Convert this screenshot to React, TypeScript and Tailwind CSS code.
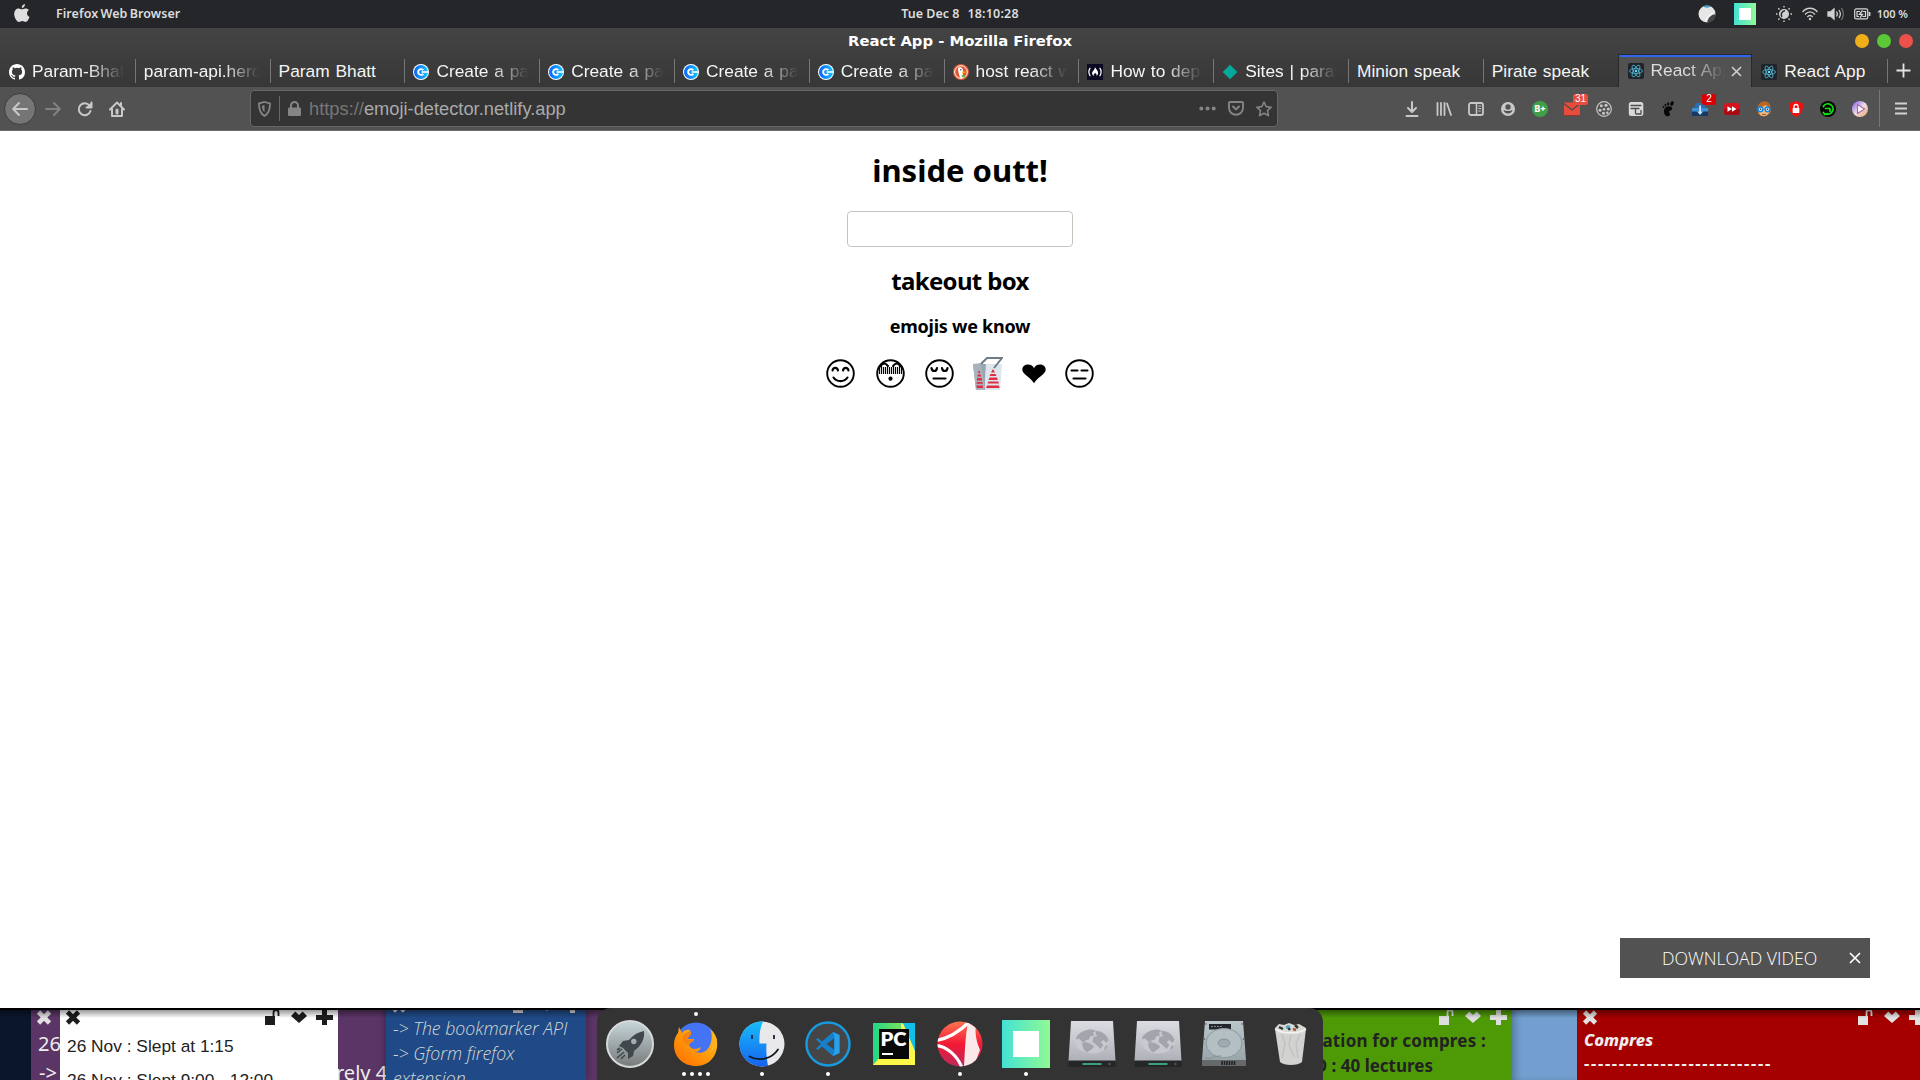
import React from "react";

const C = "#c8c8c8";

const Apple = () => (
  <svg width="16" height="20" viewBox="0 0 16 20" fill="#dedede">
    <path d="M11 0c.2 2-1.500 4-3.200 4C7.500 2 9.200.3 11 0zM8 5.200C9 5.200 10 4.300 11.700 4.400c1.300 0 2.500.6 3.200 1.700-2.800 1.800-2.300 5.700.6 6.800-.6 1.800-2.200 5-3.900 5-1.300 0-1.700-.8-3.300-.8s-2 .8-3.300.8C2.900 18 .2 13.700.2 10c0-3.600 2.200-5.600 4.300-5.600 1.500 0 2.500.8 3.500.8z" />
  </svg>
);

const Github = () => (
  <svg width="16" height="16" viewBox="0 0 16 16" fill="#fff">
    <path d="M8 0C3.580 0 0 3.580 0 8c0 3.540 2.290 6.530 5.470 7.590.4.070.55-.17.55-.38 0-.19-.01-.82-.01-1.490-2.010.37-2.530-.49-2.690-.94-.09-.23-.48-.94-.82-1.130-.28-.15-.68-.52-.01-.53.63-.01 1.080.58 1.230.82.720 1.210 1.870.87 2.330.66.070-.52.28-.87.510-1.070-1.780-.2-3.640-.89-3.640-3.950 0-.87.310-1.590.82-2.150-.08-.2-.36-1.020.08-2.120 0 0 .67-.21 2.200.82a7.600 7.600 0 0 1 4 0c1.530-1.040 2.200-.82 2.200-.82.44 1.100.16 1.920.08 2.120.510.56.82 1.270.82 2.150 0 3.070-1.870 3.750-3.650 3.950.29.25.54.73.54 1.480 0 1.070-.01 1.930-.01 2.200 0 .21.15.46.55.38A8 8 0 0 0 16 8c0-4.420-3.580-8-8-8z" />
  </svg>
);
const Coggle = () => (
  <svg width="16" height="16" viewBox="0 0 16 16">
    <defs><linearGradient id="cg"><stop stopColor="#0a62ff" /><stop offset="1" stopColor="#16c4ff" /></linearGradient></defs>
    <circle cx="8" cy="8" r="8" fill="#fff" /><circle cx="8" cy="8" r="7" fill="url(#cg)" />
    <path d="M10.300 6.200A2.900 2.900 0 1 0 10.300 9.800" fill="none" stroke="#fff" strokeWidth="1.900" /><path d="M8.500 7.200h6.500v1.600H8.500z" fill="#fff" />
  </svg>
);
const Duck = () => (
  <svg width="16" height="16" viewBox="0 0 16 16">
    <circle cx="8" cy="8" r="8" fill="#de5833" /><circle cx="8" cy="8" r="6.300" fill="none" stroke="#fff" strokeWidth="1" />
    <path d="M5 4c2-1.500 5-.5 5 3l-.5 2 1 4.500-3 .8C6 11 5 7 5 4z" fill="#fff" /><path d="M9 7.500l4 .2-3.500 1.800z" fill="#fdd20a" /><path d="M8.500 11l3.500.5v2l-3-.5z" fill="#5bbb3b" /><circle cx="7.800" cy="5.800" r=".8" fill="#2d4f8e" />
  </svg>
);
const Camp = () => (
  <svg width="16" height="16" viewBox="0 0 17 17">
    <rect width="17" height="17" fill="#0a0a23" />
    <path d="M3.500 4c-2 2.500-2 6.500 0 9M13.500 4c2 2.500 2 6.500 0 9" stroke="#fff" strokeWidth="1.300" fill="none" />
    <path d="M8.500 3.500c1 2 3.300 3.500 3.300 6 0 1.500-1 2.500-1.800 3 .5-1 .3-2-1.300-3-1.500 1-2 2-1.300 3-1.300-.5-2-1.500-2-3 0-1.500 2.500-2.500 3.100-6z" fill="#fff" />
  </svg>
);
const Diamond = () => <svg width="16" height="16" viewBox="0 0 16 16"><path d="M8 .7L15.300 8 8 15.300.7 8z" fill="#05a99c" /></svg>;
const ReactIcon = () => (
  <svg width="16" height="16" viewBox="0 0 16 16">
    <rect width="16" height="16" rx="2" fill="#20232a" />
    <g fill="none" stroke="#4fb4cf" strokeWidth=".85"><ellipse cx="8" cy="8" rx="6.500" ry="2.500" /><ellipse cx="8" cy="8" rx="6.500" ry="2.500" transform="rotate(60 8 8)" /><ellipse cx="8" cy="8" rx="6.500" ry="2.500" transform="rotate(120 8 8)" /></g>
    <circle cx="8" cy="8" r="1.300" fill="#61dafb" />
  </svg>
);

const tabs: { title: string; icon?: React.ReactNode; active?: boolean; fade?: boolean }[] = [
  { title: "Param-Bhat", icon: <Github />, fade: true },
  { title: "param-api.hero", fade: true },
  { title: "Param Bhatt" },
  { title: "Create a pa", icon: <Coggle />, fade: true },
  { title: "Create a pa", icon: <Coggle />, fade: true },
  { title: "Create a pa", icon: <Coggle />, fade: true },
  { title: "Create a pa", icon: <Coggle />, fade: true },
  { title: "host react w", icon: <Duck />, fade: true },
  { title: "How to depl", icon: <Camp />, fade: true },
  { title: "Sites | paran", icon: <Diamond />, fade: true },
  { title: "Minion speak" },
  { title: "Pirate speak" },
  { title: "React App", icon: <ReactIcon />, active: true, fade: true },
  { title: "React App", icon: <ReactIcon /> },
];

const S = ({ children, w = 16 }: { children: React.ReactNode; w?: number }) => (
  <svg className="shrink-0 overflow-visible" width={w} height={w} viewBox="0 0 16 16" fill="none" stroke={C} strokeWidth="2" strokeLinecap="round" strokeLinejoin="round">{children}</svg>
);

const extensions: React.ReactNode[] = [
  <S><path d="M8 1v9.500M4 7l4 4 4-4M2.500 15h11" /></S>,
  <S><path d="M1.500 2v12M5 2v12M8.500 2v12M11 2.500l4 11.500" strokeWidth="1.800" /></S>,
  <S><rect x="1" y="2" width="14" height="12" rx="2" strokeWidth="1.800" /><path d="M8.500 2v12" strokeWidth="1.500" /><path d="M10.800 5h2M10.800 7.500h2M10.800 10h1.500" strokeWidth="1.100" /></S>,
  <S><circle cx="8" cy="8" r="7" fill={C} stroke="none" /><circle cx="8" cy="6" r="2.700" fill="#525252" stroke="none" /><path d="M3.500 9c.8 2.800 2.500 3.500 4.500 3.500s3.700-.7 4.500-3.500c-1 .5-2.500 1-4.500 1s-3.500-.5-4.500-1z" fill="#525252" stroke="none" /></S>,
  <S><circle cx="8" cy="8" r="8" fill="#3fa047" stroke="none" /><text x="8.200" y="11" textAnchor="middle" fontSize="8.500" fontWeight="800" fill="#fff" stroke="none" fontFamily="Inter, sans-serif">B+</text></S>,
  <S><rect x="0" y="1.500" width="16" height="13.500" fill="#e84c3d" stroke="none" /><path d="M0 2.500l8 6.500 8-6.500" stroke="#4a4a4a" strokeWidth="1.200" /><rect x="0" y="14" width="16" height="1.200" fill="#8b3a32" stroke="none" /></S>,
  <S><circle cx="8" cy="8" r="7.300" strokeWidth="1.200" /><g fill={C} stroke="none"><circle cx="5.300" cy="4.800" r="1.500" /><circle cx="10" cy="4.300" r="1.600" /><circle cx="4" cy="9.200" r="1.500" /><circle cx="8" cy="8.200" r="1.300" /><circle cx="12.300" cy="8" r="1.500" /><circle cx="7.500" cy="12.300" r="1.500" /><circle cx="11.300" cy="11.700" r="1.300" /></g></S>,
  <S><rect x=".8" y="1" width="14.500" height="14" rx="2.500" fill="#dadada" stroke="none" /><path d="M3 4.500h10M3 7.500h8" stroke="#4c4c4c" strokeWidth="1.300" /><path d="M7.500 8.500V12c0 .8.500 1 1 1H13V9.500" stroke="#4c4c4c" strokeWidth="1.300" /></S>,
  <S><g fill="#080808" stroke="none"><path d="M7 5.500c4-1.200 6 .7 5 2.800-.8 1.700-3 1.200-3 2.500s1.300 1 1 2.700C9.500 16 5.500 16 4.500 13 3.500 10 4 6.500 7 5.500z" /><ellipse cx="12" cy="2.500" rx="1.700" ry="2.300" transform="rotate(20 12 2.500)" /><ellipse cx="8.200" cy="2.800" rx="1.100" ry="1.600" /><ellipse cx="5.500" cy="4" rx=".9" ry="1.300" /><ellipse cx="3.500" cy="6" rx=".8" ry="1.100" /></g></S>,
  <S><path d="M2.500 5l2-3h7l2 3v10h-11z" fill="#2a6db0" stroke="none" /><path d="M0 7h16v4H0z" fill="#3f8ed2" stroke="none" /><path d="M0 10.500h16V15H0z" fill="#153a66" stroke="none" /><path d="M7.200 4.500h1.800v6h2L8.100 14l-3-3.500h2.100z" fill="#c8e5ff" stroke="none" /></S>,
  <S><rect x="0" y="2" width="16" height="12" rx="3" fill="#d5131c" stroke="none" /><path d="M0 8h16v3a3 3 0 0 1-3 3H3a3 3 0 0 1-3-3z" fill="#aa0b12" stroke="none" /><path d="M3.500 5.200L8 8l-4.500 2.800zM8 5.200L12.500 8 8 10.800z" fill="#fff" stroke="none" /></S>,
  <S><path d="M1.500 9C1-1 12-2 14 4l1 6-1 3H2z" fill="#b96722" stroke="none" /><path d="M3 7l7-3 3 3v4c-.500 5-9 6-10 1z" fill="#f0b878" stroke="none" /><g fill="#e3f3ff" stroke="#1687e0" strokeWidth="1.500"><circle cx="4.500" cy="8.300" r="2.400" /><circle cx="11.500" cy="8.300" r="2.400" /></g><circle cx="4.500" cy="8.300" r=".8" fill="#222" stroke="none" /><circle cx="11.500" cy="8.300" r=".8" fill="#222" stroke="none" /><path d="M6.500 13.500h3" stroke="#a14a2c" strokeWidth="1" /></S>,
  <S><path d="M8 0l7 2.500C15 9 14 13 8 16 2 13 1 9 1 2.500z" fill="#f40f0f" stroke="none" /><rect x="4.700" y="7" width="6.600" height="5" fill="#fff" stroke="none" /><path d="M6 7V5.500a2 2 0 0 1 4 0V7" stroke="#fff" strokeWidth="1.300" /></S>,
  <S><circle cx="8" cy="8" r="8" fill="#050505" stroke="none" /><path d="M3.300 5.500a5.200 5.200 0 1 1 2.200 7.200M3.300 11.500l1.500 2 3-.8" stroke="#10e010" strokeWidth="1.800" /><path d="M5.500 7.500h4.500v3" stroke="#10e010" strokeWidth="1.600" /></S>,
  <S><defs><linearGradient id="pl" x2="1" y2="1"><stop stopColor="#7a5cf0" /><stop offset=".5" stopColor="#f3d9e4" /><stop offset="1" stopColor="#e8a65c" /></linearGradient></defs><circle cx="8" cy="8" r="8" fill="url(#pl)" stroke="none" /><path d="M5.500 3.500l7 4.500-7 4.500z" fill="#fff" stroke="#a66aa6" strokeWidth="1.200" /></S>,
];

const Face = ({ kind, label }: { kind: "smile" | "flushed" | "pensive" | "flat"; label: string }) => (
  <svg role="img" aria-label={label} width="29" height="29" viewBox="0 0 29 29" fill="none" stroke="#000" strokeWidth="2.100" strokeLinecap="round">
    <circle cx="14.500" cy="14.500" r="13.300" strokeWidth="1.900" />
    {kind === "smile" && <path d="M6.500 11.500c.5-3.500 5-3.500 5.500 0M17 11.500c.5-3.500 5-3.500 5.500 0M7.500 18.500c3 4.800 11 4.800 14 0" />}
    {kind === "pensive" && <path d="M6.500 9c.5 4 5 4 5.500 0M17 9c.5 4 5 4 5.500 0M8.500 19.500h12" />}
    {kind === "flat" && <path d="M6.500 11.500h6M16.500 11.500h6M8.500 19.500h12" />}
    {kind === "flushed" && (
      <>
        <path d="M3.500 8v7M5.500 6v9M7.500 8v7M9.500 8v7M11.500 7v8M13.500 8v7M15.500 8v7M17.500 7v8M19.500 8v7M21.500 8v7M23.500 6v9M25.500 8v7" strokeWidth="1.150" strokeLinecap="butt" />
        <path d="M4 7.500c3-3.500 5-4 8-.5M17 7c3-3.500 5-3 8 .5" strokeWidth="2" />
        <circle cx="14.500" cy="19.700" r="2.100" fill="#000" stroke="none" />
      </>
    )}
  </svg>
);

const Cup = () => (
  <svg role="img" aria-label="takeout box" width="30" height="33" viewBox="0 0 30 33">
    <path d="M0 7h13l-1 26H3z" fill="#98a6b1" /><path d="M0 7l8-1 4 27H3z" fill="#a7b3bd" /><path d="M13 7l16 0-2 26H12z" fill="#dfe6eb" />
    <path d="M8 7l6-6h15l-8 10" fill="none" stroke="#6b7b88" strokeWidth="2" />
    <g fill="#dd2e44"><path d="M6 13l1.500 3h-2.500zM4.800 17.500h3l.5 2H4.300zM4.200 21h4.600l.4 2.500H3.800zM3.700 25h5.800l.4 1.800H3.500zM3.300 28.500H10V31H3.800zM20 12l2 3.500h-4zM17.500 17h5l1 2h-7zM16.500 20.500h7.500l.8 2.500H15.500zM15.300 24.500h10l.5 2H14.500zM14 28.500h12l.5 2.500H13z" /></g>
  </svg>
);

const Heart = () => <svg role="img" aria-label="heart" width="24" height="20" viewBox="0 0 24 20"><path d="M12 4.500C13-.8 23.500-1.500 23.700 5.500c0 5-7.700 7-11.700 13.700C8 12.500.3 10.500.3 5.500.5-1.500 11-.8 12 4.500z" /></svg>;

const CrossMark = ({ color, cls }: { color: string; cls: string }) => <svg className={`absolute ${cls}`} width="16" height="15" viewBox="0 0 16 15"><path d="M2.500 2l11 11M13.500 2l-11 11" stroke={color} strokeWidth="4.600" /></svg>;
const NoteTools = ({ color, cls }: { color: string; cls: string }) => (
  <svg className={`absolute ${cls}`} width="70" height="18" viewBox="0 0 70 18" fill={color}>
    <path d="M0 8h10v9H0z" /><path d="M8.500 8V4.500a2.500 2.500 0 0 1 5 0V8" fill="none" stroke={color} strokeWidth="1.800" />
    <path d="M30.300 3.500L34 7l3.700-3.500L42 8l-8 7-8-7z" /><path d="M57 2h5v5h6v5h-6v5h-5v-5h-6V7h6z" />
  </svg>
);

const Globe = () => (
  <svg width="48" height="48" viewBox="0 0 48 48">
    <defs><linearGradient id="dr" y2="1" x2="0"><stop stopColor="#dcdde2" /><stop offset="1" stopColor="#aeb0b9" /></linearGradient></defs>
    <path d="M3 1h42l2.500 40H.5z" fill="url(#dr)" /><path d="M.5 40.500h47V47H.5z" fill="#242627" />
    <rect x="14.500" y="43" width="19" height="2" fill="#3c9f80" /><circle cx="41.500" cy="44" r="1.200" fill="#555" />
    <ellipse cx="24" cy="21.500" rx="16.800" ry="12" fill="#c8cad0" />
    <path d="M8.500 17c3-5 9-7.500 15.500-7.500l4 1.500-3 1.500 1 3-4 1-1 3-4 1 1 2-4-1-3-3-3 1zM14 23c3-2 9 0 12 3.500-1 3-4 3.500-7 6-3-1.500-4.500-5-5-9.500zM28 11c6 0 11 4 12.500 9l-2 3-3-3-3 2 3 3-3 4-4-4-4-3 1-5 4-1-2-2zM37 26l3-1-2 4-2 1z" fill="#a3a5ac" />
  </svg>
);
const Square = ({ size, id }: { size: number; id: string }) => (
  <svg width={size} height={size} viewBox="0 0 48 48"><defs><linearGradient id={id}><stop stopColor="#43e2d4" /><stop offset="1" stopColor="#90f995" /></linearGradient></defs><rect width="48" height="48" fill={`url(#${id})`} /><rect x="11" y="11" width="26" height="26" fill="#fff" /></svg>
);

const dock: { icon: React.ReactNode; dots: number; top?: boolean }[] = [
  { dots: 0, icon: (
    <svg width="48" height="48" viewBox="0 0 48 48"><defs><linearGradient id="rk" y2="1" x2="0"><stop stopColor="#c7d6da" /><stop offset="1" stopColor="#777a7a" /></linearGradient></defs>
      <circle cx="24" cy="24" r="23" fill="url(#rk)" stroke="#d6d8d9" strokeWidth="2" />
      <path fillRule="evenodd" d="M38 11c1 8-3 15-10 20l-1 5-5 3 0-6-5-5-4-2 4-5 6-1c4-5 9-8 15-9zM30.500 21.500a2.700 2.700 0 1 0-5.400 0 2.700 2.700 0 0 0 5.400 0z" fill="#40484d" />
      <path d="M16 29l-5 4M18 32l-7 6M19 35l-4 4M14 28l-3 2" stroke="#40484d" strokeWidth="1.600" /></svg>) },
  { dots: 4, top: true, icon: (
    <svg width="48" height="48" viewBox="0 0 48 48"><defs><linearGradient id="ff" x1="1" x2="0" y2="1"><stop stopColor="#ffc229" /><stop offset=".5" stopColor="#ff9a0a" /><stop offset="1" stopColor="#ff6a00" /></linearGradient></defs>
      <circle cx="24" cy="23" r="20.500" fill="#4473f4" />
      <path d="M7 7l3 6c2-3 5-4 8-3l1 4c-2 1-3 3-3 5l6 0c0 3-4 3-5 6 3 6 8 4 12 2-1 3-3 5-6 5 12 4 19-8 16-22 5 5 7 11 6 18-2 11-10 18-21 18C11 46 2 37 2 25c0-5 1-8 4-12z" fill="url(#ff)" />
      <path d="M12 14l6-3 1 4c-3 2-3 3-3 5l5-.500c0 3-4 3-5 6-5-2-7-7-4-11.500z" fill="#f58412" /><path d="M38 9c5 8 4 19-2 25 6-3 9-8 9-14-1-4-3-8-7-11z" fill="#ffb31c" /></svg>) },
  { dots: 1, icon: (
    <svg width="48" height="48" viewBox="0 0 48 48"><defs><linearGradient id="fi" y2="1" x2="0"><stop stopColor="#16bdfb" /><stop offset="1" stopColor="#1862ef" /></linearGradient></defs>
      <circle cx="24" cy="24" r="22.500" fill="#e9e9eb" /><path d="M25 1.500C22 8 21 16 21.500 23.500h7c-.5 7 0 14 1.500 22.500C14 49 1.500 38 1.500 24c0-13 11-23 23.500-22.500z" fill="url(#fi)" />
      <path d="M14 15v4M36 15v4" stroke="#162536" strokeWidth="1.800" /><path d="M11.500 36.500c9 5 22 3 28.500-7" fill="none" stroke="#101820" strokeWidth="1.700" strokeLinecap="round" /></svg>) },
  { dots: 1, icon: (
    <svg width="48" height="48" viewBox="0 0 48 48"><circle cx="24" cy="24" r="21.500" fill="#454545" stroke="#179be0" strokeWidth="2.400" />
      <path fillRule="evenodd" d="M29 12l6.500 3v18L29 36 18 26.500l-4 3.500-2-1.500 5-4.500-5-4.500 2-1.500 4 3.500zM30 18.500L22.500 24l7.500 5.500z" fill="#1681c8" /><path d="M29 12l6.500 3v18L29 36l1.500-5V17z" fill="#2ba0e8" /></svg>) },
  { dots: 0, icon: (
    <svg width="48" height="48" viewBox="0 0 48 48"><defs><linearGradient id="pc"><stop stopColor="#21d789" /><stop offset=".6" stopColor="#6fe15f" /><stop offset="1" stopColor="#16c8e8" /></linearGradient></defs>
      <path d="M3 3h42v42H3z" fill="url(#pc)" /><path d="M31 3l4 2 10 23v17H13L3 45l8-9h20z" fill="#fcf84a" /><path d="M33 3h12v28z" fill="#0fc1ea" />
      <rect x="9" y="9" width="30" height="30" fill="#080808" /><text x="10.500" y="25.500" fontSize="19" fontWeight="800" fill="#fff" fontFamily="Lato, sans-serif" textLength="26" lengthAdjust="spacingAndGlyphs">PC</text><path d="M12 34h11" stroke="#fff" strokeWidth="2" /></svg>) },
  { dots: 1, icon: (
    <svg width="48" height="48" viewBox="0 0 48 48"><defs><clipPath id="rc"><circle cx="24" cy="24" r="22.500" /></clipPath><linearGradient id="rg" y2="1" x2="0"><stop stopColor="#ff7a55" /><stop offset=".5" stopColor="#f31935" /><stop offset="1" stopColor="#b92a5a" /></linearGradient></defs>
      <g clipPath="url(#rc)"><rect width="48" height="48" fill="url(#rg)" /><path d="M0 20.500C14 18 25 10 33 2M0 25.500c11 1 21 10 26 22" fill="none" stroke="#fff" strokeWidth="3.200" /><path d="M32 2l8 2c-1 8-.5 15 4 26l-6 16H28c1-14 1-28 4-44z" fill="#fbe9ea" /></g></svg>) },
  { dots: 1, icon: <Square size={48} id="sq2" /> },
  { dots: 0, icon: <Globe /> },
  { dots: 0, icon: <Globe /> },
  { dots: 0, icon: (
    <svg width="48" height="48" viewBox="0 0 48 48"><defs><linearGradient id="hd" y2="1" x2="0"><stop stopColor="#bcc7cb" /><stop offset="1" stopColor="#93a0a4" /></linearGradient></defs>
      <path d="M5 1h38l3 39v6H2v-6z" fill="url(#hd)" /><path d="M2 40h44v6H2z" fill="#65696b" /><rect x="9" y="4" width="22" height="5.500" fill="#23272b" /><path d="M11 6.500h11" stroke="#7d868b" strokeDasharray="2 1" />
      <ellipse cx="24" cy="23" rx="18" ry="14.500" fill="#b3bfc3" stroke="#8b989d" /><ellipse cx="24" cy="23" rx="6" ry="4" fill="#9eabb0" stroke="#849195" /><path d="M5 38c6 2 8-2 16-2" stroke="#839094" fill="none" />
      <path d="M22 41v4M24.500 41v4M27 41v4M29.500 41v4M32 41v4M34.500 41v4" stroke="#1d1f20" strokeWidth="1.500" /><g fill="#55595c"><circle cx="6" cy="4" r=".8" /><circle cx="42" cy="4" r=".8" /><circle cx="4.500" cy="19" r=".8" /><circle cx="43.500" cy="19" r=".8" /></g></svg>) },
  { dots: 0, icon: (
    <svg width="48" height="48" viewBox="0 0 48 48"><path d="M9 8l4-4 5 1 5-2 5 2 5-1 7 4-2 6H11z" fill="#d9d9d6" /><path d="M13 7l4 2M21 6l3 4M29 5l3 3" stroke="#333" strokeWidth="2.500" /><path d="M20 8l4-2" stroke="#4bafd5" strokeWidth="2" /><path d="M27 9l3 1" stroke="#a85735" strokeWidth="2.500" />
      <path d="M9 9c7 5 24 5 31 0l-4 33c-4 4-18 4-22 0z" fill="#d8d8d6" opacity=".96" /><path d="M16 14l3 10-3 14M25 15l-2 10 5 12M34 14l-4 10 2 14" stroke="#bcbcba" strokeWidth="1.500" fill="none" opacity=".7" /><path d="M9 9c7 5 24 5 31 0" fill="none" stroke="#f5f5f5" strokeWidth="1.500" /></svg>) },
];

export default function App() {
  return (
    <div className="relative flex h-[1080px] w-[1920px] flex-col overflow-hidden bg-white font-['Liberation_Sans',sans-serif]">
      <header className="grid h-7 shrink-0 grid-cols-3 items-center bg-[#242629] font-['Noto_Sans',sans-serif] text-[12.500px] font-semibold text-[#dcdcdc]">
        <div className="flex items-center pl-3.5"><Apple /><span className="ml-[26px] tracking-[0.05px] whitespace-nowrap [word-spacing:-1px]">Firefox Web Browser</span></div>
        <div className="flex justify-center gap-[8px] whitespace-nowrap"><span>Tue Dec 8</span><span className="tracking-[0.2px]">18:10:28</span></div>
        <div className="flex items-center justify-end pr-[12px]">
          <svg width="18" height="18" viewBox="0 0 18 18"><circle cx="9" cy="9" r="8.500" fill="#e6e6e6" /><path d="M5 1.500a8.500 8.500 0 0 1 8 0c-2 1.500-6 1.500-8 0z" fill="#3d9ad1" /><path d="M17.500 9c-5 1-7.500 4-8.500 8.500C14 18 18 13 17.500 9z" fill="#444" /><path d="M15.500 8c-3 1-6.500 4-7.500 7.500" stroke="#fff" fill="none" /></svg>
          <span className="ml-[18px]"><Square size={22} id="sq1" /></span>
          <svg className="ml-5" width="16" height="16" viewBox="0 0 16 16" fill="none" stroke="#d0d0d0" strokeWidth="1.400"><circle cx="8" cy="8" r="4.300" fill="#d0d0d0" /><path d="M7.500 3.700a4 4 0 0 0-3 6.300" stroke="#242629" strokeWidth="1.500" transform="translate(1.500 1)" /><path d="M8 0v1.500M8 14.500V16M0 8h1.500M14.500 8H16M2.300 2.300l1.200 1.200M12.500 12.500l1.200 1.200M2.300 13.700l1.200-1.200M12.500 3.500l1.200-1.200" /></svg>
          <svg className="ml-[10px]" width="16" height="14" viewBox="0 0 16 14" fill="none" stroke="#cfcfcf" strokeWidth="1.300"><path d="M.5 5c4-5 11-5 15 0M3 7.500c3-3.500 7-3.500 10 0M5.300 10c1.700-2 3.700-2 5.400 0" /><circle cx="8" cy="12" r="1.200" fill="#cfcfcf" stroke="none" /></svg>
          <svg className="ml-[9px]" width="18" height="14" viewBox="0 0 18 14" fill="none" stroke="#cfcfcf" strokeWidth="1.300"><path d="M1 5h2.500L7 2v10L3.500 9H1z" fill="#cfcfcf" /><path d="M9.500 4.500c1 1.500 1 3.500 0 5M12 3c1.700 2.500 1.700 5.500 0 8" /><path d="M14.500 1c2.300 3.500 2.300 8.500 0 12" stroke="#777" /></svg>
          <svg className="ml-[9px]" width="17" height="12" viewBox="0 0 17 12" fill="none" stroke="#d5d5d5" strokeWidth="1.200"><rect x=".7" y=".9" width="13" height="10" rx="1.500" /><path d="M15.500 4v4" strokeWidth="1.800" /><path d="M6 3.500H3v5h2M9 3.500h2.500v5h-3" strokeWidth="1.200" /><path d="M8.500 2.500L5.500 6.300h3L6 9.700" strokeWidth="1.300" /></svg>
          <span className="ml-[6px] text-[11px] whitespace-nowrap">100 %</span>
        </div>
      </header>

      <section className="relative flex h-[59px] shrink-0 flex-col justify-end bg-linear-to-b from-[#444] to-[#373737]">
        <h1 className="absolute inset-x-0 top-[4px] text-center font-['DejaVu_Sans',sans-serif] text-[14.800px] leading-[18px] font-bold text-white">React App - Mozilla Firefox</h1>
        <div className="absolute top-[6px] right-[7px] flex gap-2"><i className="size-[14px] rounded-full bg-[#f1ae1b]" /><i className="size-[14px] rounded-full bg-[#5bc936]" /><i className="size-[14px] rounded-full bg-[#ec524b]" /></div>
        <div className="flex h-[33px] items-center">
          {tabs.map((t, i) => (
            <div key={i} className={`relative flex h-[33px] w-[134.800px] shrink-0 items-center pl-[9px] text-[17.330px] text-[#f5f5f5] [word-spacing:1px] ${t.active ? "border-x border-t border-[#292929] bg-[#525252] pl-[8px]" : "pt-[2px]"}`}>
              {t.active && <b className="absolute inset-x-0 top-0 h-[2px] bg-[#3463ee]" />}
              {t.icon && <span className="mr-[7px] shrink-0">{t.icon}</span>}
              <span className={`whitespace-nowrap ${t.active ? "w-[74px] overflow-hidden text-[#ddd]" : t.fade ? "mr-[11px] flex-1 overflow-hidden" : "mr-3 flex-1"} ${t.fade ? "mask-r-from-[calc(100%-36px)]" : ""}`}>{t.title}</span>
              {t.active && <svg className="ml-[6px]" width="11" height="11" viewBox="0 0 11 11"><path d="M1 1l9 9M10 1l-9 9" stroke="#d0d0d0" strokeWidth="1.600" /></svg>}
              {!t.active && i !== 11 && <i className="absolute top-[5px] -right-px h-6 w-px bg-[#777]" />}
            </div>
          ))}
          <svg className="ml-[9px]" width="15" height="15" viewBox="0 0 15 15"><path d="M7.500 .5v14M.5 7.500h14" stroke="#e4e4e4" strokeWidth="1.800" /></svg>
        </div>
      </section>

      <nav className="flex h-[44px] shrink-0 items-center border-b border-[#6c6c6c] bg-[#525252]">
        <div className="ml-1 flex size-8 items-center justify-center rounded-full border border-[#3d3d3d] bg-[#757575]"><S><path d="M15 8H1.500M7 2L1.200 8 7 14" /></S></div>
        <div className="ml-[9px] opacity-40"><S><path d="M1 8h13.500M9 2l5.800 6L9 14" /></S></div>
        <div className="ml-4"><S><path d="M13.500 10a6 6 0 1 1-1-5.500M14.500 1.500v5h-5" /><path d="M14.500 2v4.500H10z" fill={C} strokeWidth="1" /></S></div>
        <div className="ml-4"><S><path d="M1 8.500L8 1.500l7 7M3 8v7h10V8M12 2v3" /><path d="M8 9v3" strokeWidth="3" /></S></div>
        <div className="ml-[125px] flex h-[37px] w-[1028px] shrink-0 items-center rounded border border-[#666] bg-[#343434] text-[18.300px]">
          <svg className="ml-[7px]" width="13" height="16" viewBox="0 0 13 16" fill="none" stroke="#858585" strokeWidth="1.800"><path d="M6.500 1L12 2.500c0 6-1 10-5.500 12.500C2 12.500 1 8.500 1 2.500z" /><path d="M6.500 4l-2.500.8c.1 3 .8 5 2.500 6.500z" fill="#858585" stroke="none" /></svg>
          <i className="ml-[8px] h-[25px] w-px bg-[#666]" />
          <svg className="ml-[8px]" width="13" height="15" viewBox="0 0 13 15"><rect y="6.500" width="13" height="8.500" rx="1.200" fill="#858585" /><path d="M3 7V4.500a3.500 3.500 0 0 1 7 0V7" fill="none" stroke="#858585" strokeWidth="2" /></svg>
          <span className="ml-[8px] flex-1 text-[#aaa]"><span className="text-[#777]">https://</span>emoji-detector.netlify.app</span>
          <svg className="mr-[12px]" width="17" height="5" viewBox="0 0 17 5" fill="#858585"><circle cx="2.300" cy="2.500" r="2" /><circle cx="8.500" cy="2.500" r="2" /><circle cx="14.700" cy="2.500" r="2" /></svg>
          <svg className="mr-[12px]" width="16" height="15" viewBox="0 0 16 15" fill="none" stroke="#858585" strokeWidth="1.900" strokeLinecap="round"><path d="M1 2c0-.6.4-1 1-1h12c.6 0 1 .4 1 1v5c0 9-14 9-14 0z" strokeLinejoin="round" /><path d="M5 5.500l3 3 3-3" /></svg>
          <svg className="mr-[5px]" width="16" height="16" viewBox="0 0 16 16" fill="none" stroke="#858585" strokeWidth="1.600" strokeLinejoin="round"><path d="M8 1l2.200 4.600 5 .6-3.700 3.400 1 5L8 12.200l-4.500 2.400 1-5L.8 6.200l5-.6z" /></svg>
        </div>
        <div className="ml-[126px] flex items-center gap-4">
          {extensions.map((e, i) => (
            <div key={i} className="relative size-4">
              {e}
              {i === 5 && <span className="absolute -top-[7px] left-[9px] flex h-[11px] w-[15px] items-center justify-center rounded-[2px] bg-[#e84c3d] text-[10px] leading-none text-white">31</span>}
              {i === 9 && <span className="absolute -top-[7px] left-[10px] flex h-[11px] w-[14px] items-center justify-center rounded-[2px] bg-[#da0000] text-[10px] leading-none text-white">2</span>}
            </div>
          ))}
        </div>
        <i className="ml-[11px] h-[37px] w-px bg-[#777]" />
        <svg className="ml-[15px]" width="12" height="13" viewBox="0 0 12 13"><path d="M0 1.500h12M0 6.500h12M0 11.500h12" stroke="#d2d2d2" strokeWidth="2" /></svg>
      </nav>

      <main className="flex h-[877px] shrink-0 flex-col items-center bg-white font-['Noto_Sans',sans-serif] font-bold text-black">
        <h1 className="mt-[19px] text-[31px] leading-10">inside outt!</h1>
        <input aria-label="emoji" className="mt-[21px] h-9 w-[226px] rounded border border-[#c8c2bc] bg-white" />
        <h2 className="mt-[18px] text-[24px] leading-8 tracking-[-0.650px]">takeout box</h2>
        <h3 className="mt-[17px] text-[18px] leading-6 tracking-[-0.250px]">emojis we know</h3>
        <div className="mt-[19px] flex h-[33px] items-center">
          <Face kind="smile" label="smiling" />
          <span className="ml-[20.500px]"><Face kind="flushed" label="flushed" /></span>
          <span className="ml-[20.500px]"><Face kind="pensive" label="pensive" /></span>
          <span className="ml-[19px]"><Cup /></span>
          <span className="ml-[18.500px]"><Heart /></span>
          <span className="ml-[19.500px]"><Face kind="flat" label="expressionless" /></span>
        </div>
      </main>

      <footer className="relative h-[72px] shrink-0 overflow-hidden bg-[#0b162b] whitespace-nowrap">
        <div className="absolute top-0 left-[31px] h-[72px] w-[580px] bg-[#5b3566] font-['Noto_Sans',sans-serif] text-[20px] leading-6 text-[#eee]">
          <CrossMark color="#e2dfe3" cls="top-[2px] left-[5px]" />
          <span className="absolute top-[24px] left-[7px]">26</span><span className="absolute top-[53px] left-[8px]">-&gt;</span><span className="absolute top-[53px] left-[305px]">rely 4</span>
        </div>
        <div className="absolute top-0 left-[60px] h-[72px] w-[278px] bg-white text-[17.330px] leading-5 text-[#222]">
          <CrossMark color="#1d1d1d" cls="top-[2px] left-[5px]" /><NoteTools color="#1d1d1d" cls="top-0 left-[205px]" />
          <p className="absolute top-[28px] left-[7px]">26 Nov : Slept at 1:15</p><p className="absolute top-[62px] left-[7px]">26 Nov : Slept 9:00 - 12:00</p>
        </div>
        <div className="absolute top-0 left-[386px] h-[72px] w-[200px] bg-[#204a87] font-['Open_Sans',sans-serif] text-[17.700px] leading-[25px] font-light text-[#d3d7cf] italic shadow-[0_0_8px_rgba(0,0,0,.4)]">
          <CrossMark color="#d8d8d8" cls="-top-[10px] left-[5px]" /><NoteTools color="#d8d8d8" cls="-top-[12px] left-[127px]" />
          <p className="mt-2 ml-[7px]">-&gt; The bookmarker API<br />-&gt; Gform firefox<br />extension</p>
        </div>
        <div className="absolute top-0 left-[1300px] h-[72px] w-[212px] bg-[#4e9a06] font-['Noto_Sans',sans-serif] text-[17px] leading-[25px] font-bold text-[#222]">
          <NoteTools color="#dedede" cls="top-0 left-[139px]" />
          <p className="absolute top-[20px] right-[26px] tracking-[0.2px]">preparation for compres :</p><p className="absolute top-[45px] right-[79px]">TODO : 40 lectures</p>
        </div>
        <div className="absolute top-0 left-[1512px] h-[72px] w-[65px] bg-[#729fcf] shadow-[inset_6px_0_8px_-4px_rgba(0,0,0,.3)]" />
        <div className="absolute top-0 left-[1577px] h-[72px] w-[343px] bg-[#a40000] font-['Noto_Sans',sans-serif] text-[16.500px] leading-6 font-bold text-[#eee]">
          <CrossMark color="#e2e2e2" cls="top-[2px] left-[5px]" /><NoteTools color="#e2e2e2" cls="top-0 left-[281px]" />
          <p className="absolute top-[20px] left-[7px] font-extrabold italic">Compres</p><p className="absolute top-[43px] left-[7px] tracking-[1.680px]">---------------------------</p>
        </div>
        <div className="absolute inset-x-0 top-0 h-2.500 bg-linear-to-b from-black/60 to-transparent" />
        <div className="absolute inset-x-0 top-0 h-[10px] bg-linear-to-b from-black/50 to-transparent" />
        <div className="absolute inset-x-0 top-0 h-[2px] bg-black" />
        <div className="absolute top-0 left-[597px] flex h-[72px] w-[726px] rounded-t-[14px] bg-[#333]">
          {dock.map((d, i) => (
            <div key={i} className="relative flex w-[66px] shrink-0 flex-col items-center pt-3">
              {d.top && <i className="absolute top-1 size-1 rounded-full bg-white" />}
              {d.icon}
              <div className="mt-1 flex gap-1">{Array.from({ length: d.dots }, (_, k) => <i key={k} className="size-1 rounded-full bg-white" />)}</div>
            </div>
          ))}
        </div>
      </footer>

      <aside className="absolute top-[938px] left-[1620px] flex h-10 w-[250px] items-center bg-[#525252] font-['Open_Sans',sans-serif] text-[17.700px] font-light text-white">
        <span className="ml-[42px] flex-1 whitespace-nowrap">DOWNLOAD VIDEO</span>
        <svg className="mr-[9px]" width="12" height="12" viewBox="0 0 12 12"><path d="M1 1l10 10M11 1L1 11" stroke="#fff" strokeWidth="1.700" /></svg>
      </aside>
    </div>
  );
}
